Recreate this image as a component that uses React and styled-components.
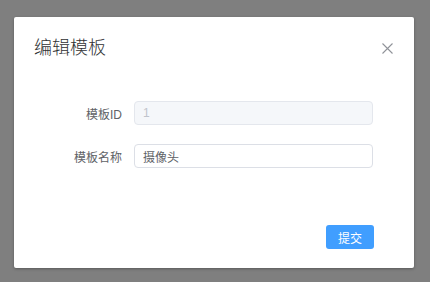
import React from "react";
import styled, { createGlobalStyle } from "styled-components";

const GlobalStyle = createGlobalStyle`
  html, body {
    margin: 0;
    padding: 0;
    background: #7f7f7f;
    font-family: "Liberation Sans", "Noto Sans CJK SC", sans-serif;
  }
`;

const Overlay = styled.div`
  width: 430px;
  height: 282px;
  background: #7f7f7f;
  padding-top: 17px;
  box-sizing: border-box;
`;

const Dialog = styled.div`
  position: relative;
  width: 400px;
  height: 251px;
  margin-left: 14px;
  background: #fff;
  border-radius: 2px;
  box-shadow: 0 1px 3px rgba(0, 0, 0, 0.3);
  box-sizing: border-box;
  display: flex;
  flex-direction: column;
`;

const Header = styled.div`
  padding: 20px 20px 10px;
`;

const Title = styled.span`
  font-size: 18px;
  font-weight: 300;
  line-height: 22px;
  color: #303133;
`;

const CloseButton = styled.button`
  position: absolute;
  top: 26px;
  right: 21px;
  width: 11px;
  height: 11px;
  padding: 0;
  border: none;
  background: transparent;
  cursor: pointer;
  display: flex;
`;

const Body = styled.div`
  padding: 32px 41px 0 20px;
  display: flex;
  flex-direction: column;
  gap: 19px;
`;

const Row = styled.div`
  display: flex;
  align-items: center;
`;

const Label = styled.label`
  width: 100px;
  padding-right: 12px;
  box-sizing: border-box;
  text-align: right;
  font-size: 12px;
  color: #606266;
`;

const Input = styled.input`
  flex: 1;
  height: 24px;
  box-sizing: border-box;
  padding: 0 8px;
  border: 1px solid ${(p) => (p.disabled ? "#e4e7ed" : "#dcdfe6")};
  border-radius: 4px;
  background: ${(p) => (p.disabled ? "#f5f7fa" : "#fff")};
  color: ${(p) => (p.disabled ? "#c0c4cc" : "#606266")};
  font-family: inherit;
  font-size: 12px;
  outline: none;
`;

const Footer = styled.div`
  margin-top: auto;
  padding: 0 40px 19px;
  display: flex;
  justify-content: flex-end;
`;

const SubmitButton = styled.button`
  width: 48px;
  height: 24px;
  border: none;
  border-radius: 3px;
  background: #409eff;
  color: #fff;
  font-family: inherit;
  font-size: 12px;
  padding: 0;
  cursor: pointer;
`;

export default function App() {
  return (
    <>
      <GlobalStyle />
      <Overlay>
        <Dialog>
          <Header>
            <Title>编辑模板</Title>
          </Header>
          <CloseButton aria-label="close">
            <svg width="11" height="11" viewBox="0 0 11 11">
              <path d="M0.5 0.5L10.5 10.5M10.5 0.5L0.5 10.5" stroke="#909399" strokeWidth="1.1" />
            </svg>
          </CloseButton>
          <Body>
            <Row>
              <Label>模板ID</Label>
              <Input disabled value="1" readOnly />
            </Row>
            <Row>
              <Label>模板名称</Label>
              <Input defaultValue="摄像头" />
            </Row>
          </Body>
          <Footer>
            <SubmitButton>提交</SubmitButton>
          </Footer>
        </Dialog>
      </Overlay>
    </>
  );
}
